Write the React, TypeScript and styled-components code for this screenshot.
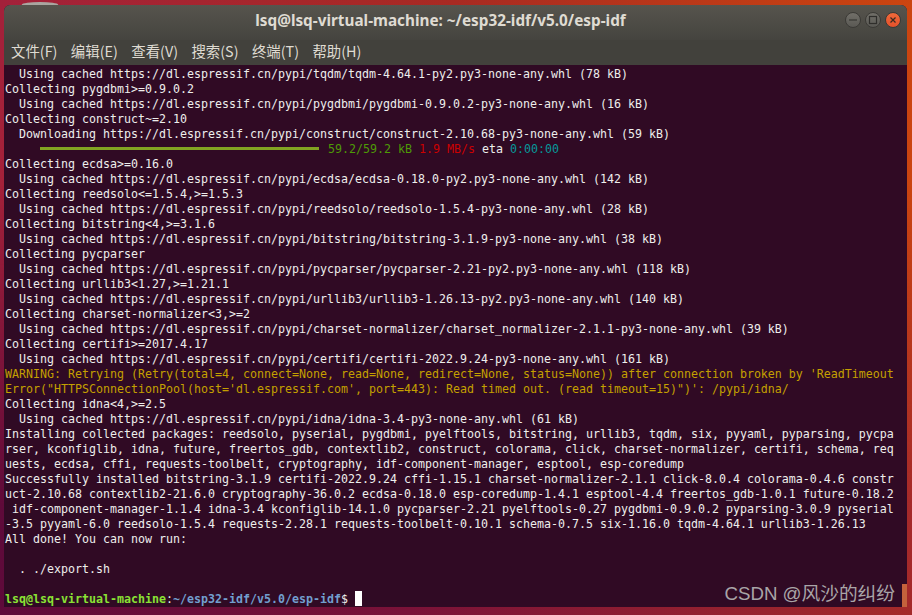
import React from 'react';
import styled, { createGlobalStyle } from 'styled-components';

const GlobalStyle = createGlobalStyle`
  html, body {
    margin: 0;
    padding: 0;
    height: 615px;
    overflow: hidden;
  }
`;

const Desktop = styled.div`
  width: 912px;
  height: 615px;
  box-sizing: border-box;
  padding: 5px 5px 8px 4px;
  background: linear-gradient(90deg, #a3213a 0%, #a82a22 50%, #cb4510 100%);
  position: relative;
  &::after {
    content: "";
    position: absolute;
    left: 0;
    right: 0;
    bottom: 0;
    height: 70%;
    background: linear-gradient(90deg, #5e0a3a 0%, #7a1238 45%, #a52a2a 100%);
    mask-image: linear-gradient(180deg, transparent, #000 75%);
  }
`;

/* bit of another window peeking out above the terminal */
const Peek = styled.div`
  position: absolute;
  left: 22px;
  top: 2px;
  width: 36px;
  height: 5px;
  border-radius: 50% 50% 0 0;
  background: #a9a6a0;
`;

const Window = styled.div`
  position: relative;
  z-index: 1;
  height: 602px;
  display: flex;
  flex-direction: column;
  border-radius: 6px 6px 0 0;
  overflow: hidden;
  background: #300a24;
`;

const TitleBar = styled.div`
  height: 35px;
  flex: none;
  box-sizing: border-box;
  padding: 0 30px 6px 0;
  display: flex;
  align-items: center;
  justify-content: center;
  position: relative;
  background: linear-gradient(180deg, #56544d 0%, #45443f 100%);
`;

const Title = styled.div`
  font-family: "Noto Sans", "Noto Sans CJK SC", sans-serif;
  font-size: 15.3px;
  font-weight: 700;
  color: #dfdbd2;
`;

const Controls = styled.div`
  position: absolute;
  right: 6px;
  top: 7px;
  display: flex;
  gap: 4px;
`;

const Control = styled.div<{ $close?: boolean }>`
  width: 16px;
  height: 16px;
  box-sizing: border-box;
  border-radius: 50%;
  display: flex;
  align-items: center;
  justify-content: center;
  border: 0.5px solid #3b3a36;
  background: ${p => (p.$close ? 'linear-gradient(180deg, #f0693a, #e4512b)' : 'linear-gradient(180deg, #716f69, #5a5954)')};
  svg {
    display: block;
  }
`;

const MenuBar = styled.div`
  height: 25px;
  flex: none;
  box-sizing: border-box;
  display: flex;
  gap: 13.4px;
  padding: 0 0 4px 7px;
  align-items: center;
  background: #42413c;
`;

const MenuItem = styled.div`
  font-family: "Noto Sans CJK SC", "Noto Sans", sans-serif;
  font-size: 14.4px;
  color: #dfdbd2;
  white-space: pre;
`;

const Terminal = styled.div`
  flex: 1;
  padding: 2px 0 0 1px;
  background: #300a24;
  font-family: "DejaVu Sans Mono", monospace;
  font-size: 11.63px;
  line-height: 15px;
  color: #eeeeec;
`;

const Line = styled.div<{ $warn?: boolean }>`
  height: 15px;
  white-space: pre;
  color: ${p => (p.$warn ? '#c4a000' : 'inherit')};
`;

const Bar = styled.span`
  display: inline-block;
  width: 279px;
  height: 3px;
  margin: 0 9px 0 35px;
  vertical-align: 3px;
  background: #82a322;
`;

const Green = styled.span`
  color: #4e9a06;
`;

const Red = styled.span`
  color: #cc0000;
`;

const Cyan = styled.span`
  color: #06989a;
`;

const PromptUser = styled.span`
  color: #8ae234;
  font-weight: 700;
`;

const PromptPath = styled.span`
  color: #729fcf;
  font-weight: 700;
`;

const Cursor = styled.span`
  display: inline-block;
  width: 7px;
  height: 15px;
  margin: -1px 0 0 7px;
  vertical-align: top;
  background: #ffffff;
`;

const ScrollThumb = styled.div`
  position: absolute;
  right: 0;
  bottom: 0;
  width: 5px;
  height: 23px;
  background: #c4623c;
`;

const Watermark = styled.div`
  position: absolute;
  right: 12px;
  bottom: 1px;
  font-family: "Liberation Sans", "Noto Sans CJK SC", sans-serif;
  font-size: 18.7px;
  line-height: 24px;
  color: #a9a5a8;
`;

const lines: string[] = [
  '  Using cached https://dl.espressif.cn/pypi/tqdm/tqdm-4.64.1-py2.py3-none-any.whl (78 kB)',
  'Collecting pygdbmi>=0.9.0.2',
  '  Using cached https://dl.espressif.cn/pypi/pygdbmi/pygdbmi-0.9.0.2-py3-none-any.whl (16 kB)',
  'Collecting construct~=2.10',
  '  Downloading https://dl.espressif.cn/pypi/construct/construct-2.10.68-py3-none-any.whl (59 kB)',
  '@progress',
  'Collecting ecdsa>=0.16.0',
  '  Using cached https://dl.espressif.cn/pypi/ecdsa/ecdsa-0.18.0-py2.py3-none-any.whl (142 kB)',
  'Collecting reedsolo<=1.5.4,>=1.5.3',
  '  Using cached https://dl.espressif.cn/pypi/reedsolo/reedsolo-1.5.4-py3-none-any.whl (28 kB)',
  'Collecting bitstring<4,>=3.1.6',
  '  Using cached https://dl.espressif.cn/pypi/bitstring/bitstring-3.1.9-py3-none-any.whl (38 kB)',
  'Collecting pycparser',
  '  Using cached https://dl.espressif.cn/pypi/pycparser/pycparser-2.21-py2.py3-none-any.whl (118 kB)',
  'Collecting urllib3<1.27,>=1.21.1',
  '  Using cached https://dl.espressif.cn/pypi/urllib3/urllib3-1.26.13-py2.py3-none-any.whl (140 kB)',
  'Collecting charset-normalizer<3,>=2',
  '  Using cached https://dl.espressif.cn/pypi/charset-normalizer/charset_normalizer-2.1.1-py3-none-any.whl (39 kB)',
  'Collecting certifi>=2017.4.17',
  '  Using cached https://dl.espressif.cn/pypi/certifi/certifi-2022.9.24-py3-none-any.whl (161 kB)',
  "!WARNING: Retrying (Retry(total=4, connect=None, read=None, redirect=None, status=None)) after connection broken by 'ReadTimeout",
  '!Error("HTTPSConnectionPool(host=\'dl.espressif.com\', port=443): Read timed out. (read timeout=15)")\': /pypi/idna/',
  'Collecting idna<4,>=2.5',
  '  Using cached https://dl.espressif.cn/pypi/idna/idna-3.4-py3-none-any.whl (61 kB)',
  'Installing collected packages: reedsolo, pyserial, pygdbmi, pyelftools, bitstring, urllib3, tqdm, six, pyyaml, pyparsing, pycpa',
  'rser, kconfiglib, idna, future, freertos_gdb, contextlib2, construct, colorama, click, charset-normalizer, certifi, schema, req',
  'uests, ecdsa, cffi, requests-toolbelt, cryptography, idf-component-manager, esptool, esp-coredump',
  'Successfully installed bitstring-3.1.9 certifi-2022.9.24 cffi-1.15.1 charset-normalizer-2.1.1 click-8.0.4 colorama-0.4.6 constr',
  'uct-2.10.68 contextlib2-21.6.0 cryptography-36.0.2 ecdsa-0.18.0 esp-coredump-1.4.1 esptool-4.4 freertos_gdb-1.0.1 future-0.18.2',
  ' idf-component-manager-1.1.4 idna-3.4 kconfiglib-14.1.0 pycparser-2.21 pyelftools-0.27 pygdbmi-0.9.0.2 pyparsing-3.0.9 pyserial',
  '-3.5 pyyaml-6.0 reedsolo-1.5.4 requests-2.28.1 requests-toolbelt-0.10.1 schema-0.7.5 six-1.16.0 tqdm-4.64.1 urllib3-1.26.13',
  'All done! You can now run:',
  '',
  '  . ./export.sh',
  '',
  '@prompt',
];

const menus = ['文件(F)', '编辑(E)', '查看(V)', '搜索(S)', '终端(T)', '帮助(H)'];

const renderLine = (text: string, i: number) => {
  if (text === '@progress') {
    return (
      <Line key={i}>
        <Bar />
        <Green>59.2/59.2 kB</Green> <Red>1.9 MB/s</Red> eta <Cyan>0:00:00</Cyan>
      </Line>
    );
  }
  if (text === '@prompt') {
    return (
      <Line key={i}>
        <PromptUser>lsq@lsq-virtual-machine</PromptUser>:<PromptPath>~/esp32-idf/v5.0/esp-idf</PromptPath>$
        <Cursor />
      </Line>
    );
  }
  if (text.startsWith('!')) {
    return <Line key={i} $warn>{text.slice(1)}</Line>;
  }
  return <Line key={i}>{text}</Line>;
};

const App: React.FC = () => (
  <Desktop>
    <GlobalStyle />
    <Peek />
    <Window>
      <TitleBar>
        <Title>lsq@lsq-virtual-machine: ~/esp32-idf/v5.0/esp-idf</Title>
        <Controls>
          <Control>
            <svg width="10" height="10" viewBox="0 0 10 10">
              <path d="M1 5h8" stroke="#2f2e2b" strokeWidth="1.2" />
            </svg>
          </Control>
          <Control>
            <svg width="10" height="10" viewBox="0 0 10 10">
              <rect x="1.5" y="1.5" width="7" height="7" fill="none" stroke="#2f2e2b" strokeWidth="1.2" />
            </svg>
          </Control>
          <Control $close>
            <svg width="10" height="10" viewBox="0 0 10 10">
              <path d="M2.5 2.5l5 5M7.5 2.5l-5 5" stroke="#3a2a20" strokeWidth="1.2" />
            </svg>
          </Control>
        </Controls>
      </TitleBar>
      <MenuBar>
        {menus.map(m => (
          <MenuItem key={m}>{m}</MenuItem>
        ))}
      </MenuBar>
      <Terminal>{lines.map(renderLine)}</Terminal>
      <ScrollThumb />
      <Watermark>CSDN @风沙的纠纷</Watermark>
    </Window>
  </Desktop>
);

export default App;
